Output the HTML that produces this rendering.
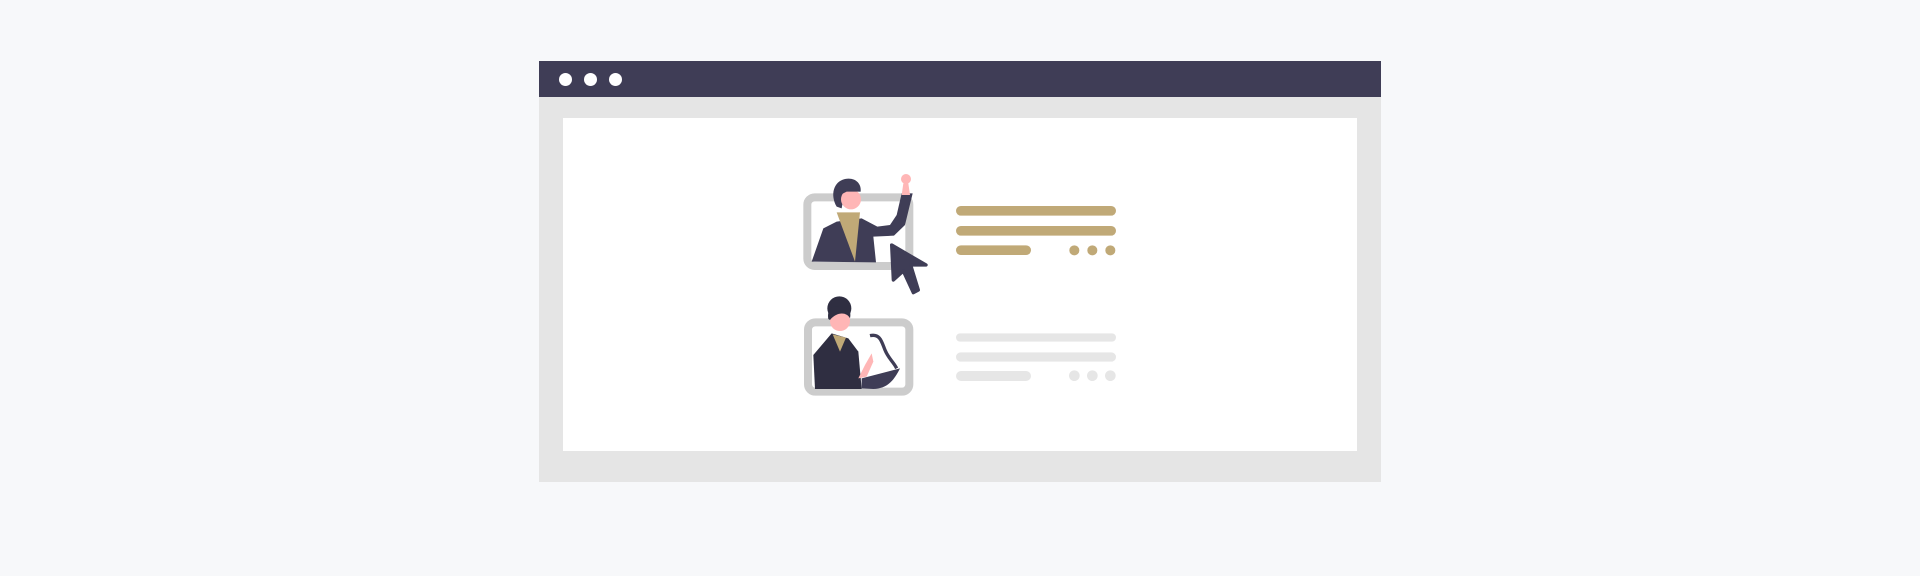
<!DOCTYPE html>
<html><head><meta charset="utf-8"><style>
html,body{margin:0;padding:0;width:1920px;height:576px;background:#f7f8fa;overflow:hidden;font-family:"Liberation Sans",sans-serif}
.frame{position:absolute;left:539px;top:61px;width:842px;height:421px;background:#e5e5e5}
.bar{position:absolute;left:0;top:0;width:842px;height:36px;background:#3f3d56}
.dot{position:absolute;top:12px;width:13px;height:13px;border-radius:50%;background:#fff}
.white{position:absolute;left:24px;top:57px;width:794px;height:333px;background:#fff}
</style></head><body>
<div class="frame">
<div class="bar"><div class="dot" style="left:20px"></div><div class="dot" style="left:45px"></div><div class="dot" style="left:70px"></div></div>
<div class="white"></div>
</div>
<svg style="position:absolute;left:790px;top:165px" width="340" height="245" viewBox="0 0 1020 735">
<rect x="52" y="97" width="306" height="206" rx="22" fill="#fff" stroke="#cccccc" stroke-width="24"/>
<path d="M65 290 L100 190 L140 170 L215 160 L262 185 L300 180 L320 150 L335 85 L368 85 L345 180 L312 212 L250 215 L258 292 Z" fill="#3f3d56"/>
<path d="M140 142 L210 142 L195 290 Z" fill="#c0a977"/>
<path d="M335 90 L340 55 L355 55 L360 90 Z" fill="#ffb6b6"/>
<circle cx="348" cy="42" r="15" fill="#ffb6b6"/>
<path d="M140 125 C120 90 130 50 165 42 C195 36 215 55 212 80 L170 78 C160 95 158 115 155 130 Z" fill="#3f3d56"/>
<circle cx="183" cy="103" r="30" fill="#ffb6b6"/>
<path d="M150 90 C160 70 190 65 212 80 L170 80 Z" fill="#3f3d56"/>
<path d="M305 240 L408 300 L362 300 L385 375 L370 383 L340 318 L310 345 Z" fill="#3f3d56" stroke="#3f3d56" stroke-width="10" stroke-linejoin="round"/>
<rect x="498" y="123" width="480" height="29" rx="14.5" fill="#c0a977"/>
<rect x="498" y="183" width="480" height="29" rx="14.5" fill="#c0a977"/>
<rect x="498" y="241" width="225" height="29" rx="14.5" fill="#c0a977"/>
<circle cx="853" cy="256" r="15" fill="#c0a977"/><circle cx="907" cy="256" r="15" fill="#c0a977"/><circle cx="961" cy="256" r="15" fill="#c0a977"/>
<rect x="54" y="472" width="304" height="208" rx="22" fill="#fff" stroke="#cccccc" stroke-width="24"/>
<path d="M215 670 L215 640 L330 610 C310 650 290 670 250 672 Z" fill="#3f3d56"/>
<path d="M240 512 C270 505 275 530 285 555 C295 580 310 590 320 610" fill="none" stroke="#3f3d56" stroke-width="10"/>
<path d="M70 570 L125 505 L175 520 L205 560 L215 672 L75 672 Z" fill="#2f2e41"/>
<path d="M128 508 L168 518 L150 560 Z" fill="#c0a977"/>
<path d="M205 640 L225 600 L245 565 L250 590 L230 635 Z" fill="#ffb6b6"/>
<circle cx="148" cy="430" r="36" fill="#2f2e41"/>
<circle cx="150" cy="468" r="30" fill="#ffb6b6"/>
<path d="M115 462 C110 430 130 420 150 425 C175 425 185 440 180 460 C170 440 140 440 120 465 Z" fill="#2f2e41"/>
<rect x="498" y="505" width="480" height="25" rx="12.5" fill="#e6e6e6"/>
<rect x="498" y="562" width="480" height="28" rx="14" fill="#e6e6e6"/>
<rect x="498" y="618" width="225" height="30" rx="15" fill="#e6e6e6"/>
<circle cx="853" cy="632" r="16" fill="#e6e6e6"/><circle cx="907" cy="632" r="16" fill="#e6e6e6"/><circle cx="961" cy="632" r="16" fill="#e6e6e6"/>
</svg>
</body></html>
